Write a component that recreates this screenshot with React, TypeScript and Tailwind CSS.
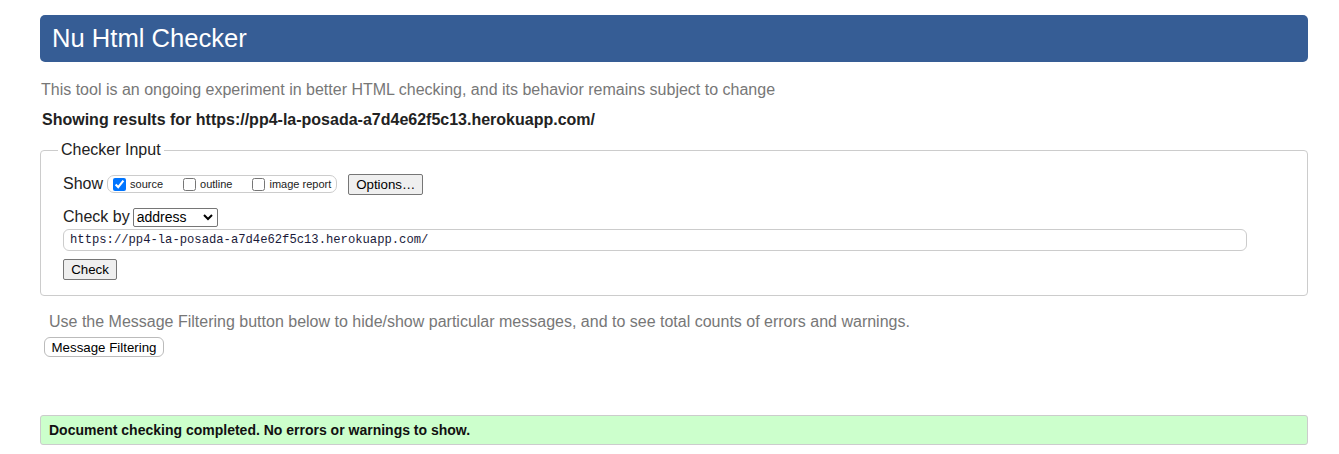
import React from 'react';

const sans = "font-['Liberation_Sans',Arial,sans-serif]";

const Checkbox = ({label, checked}: {label: string; checked?: boolean}) => (
    <label className="flex items-center gap-[4px] text-[11px] text-[#222]">
        <input type="checkbox" defaultChecked={checked} className="m-0 w-[13px] h-[13px] accent-[#0075ff]"/>
        <span>{label}</span>
    </label>
);

const App = () => {
    const url = "https://pp4-la-posada-a7d4e62f5c13.herokuapp.com/";
    return (
        <div className={`${sans} bg-white min-h-[454px] pt-[15px] pl-[40px] pr-[31px]`}>
            <h1 className="bg-[#365d95] text-white text-[25.6px] leading-[47px] h-[47px] rounded-[5px] px-[12px]">
                Nu Html Checker
            </h1>
            <p className="mt-[18px] text-[16px] leading-[20px] text-[#777] pl-[1px]">
                This tool is an ongoing experiment in better HTML checking, and its behavior remains subject to change
            </p>
            <p className="mt-[10px] text-[16px] leading-[20px] font-bold text-[#222] pl-[2px]">
                Showing results for {url}
            </p>
            <fieldset className="mt-[11px] border border-[#ccc] rounded-[4px] pl-[17px] pr-[60px] pb-[15px]">
                <legend className="px-[3px] text-[16px] leading-[18px] text-[#222]">Checker Input</legend>
                <div className="ml-[5px] mt-[14px] flex items-center h-[22px]">
                    <span className="text-[16px] text-[#222] mr-[4px]">Show</span>
                    <div className="flex items-center h-[18px] border border-[#ccc] rounded-[7px] pl-[5px] pr-[5px]">
                        <Checkbox label="source" checked/>
                        <div className="w-[20px]"/>
                        <Checkbox label="outline"/>
                        <div className="w-[20px]"/>
                        <Checkbox label="image report"/>
                    </div>
                    <button className="ml-[11px] h-[21px] w-[75px] text-[13.3px] text-black bg-[#efefef] border border-[#767676] rounded-[2px]">
                        Options…
                    </button>
                </div>
                <div className="ml-[5px] mt-[12px] flex items-center h-[20px]">
                    <span className="text-[16px] text-[#222] mr-[3px]">Check by</span>
                    <div className="relative w-[85px] h-[19px] border border-[#767676] rounded-[2px] bg-white flex items-center pl-[3px] text-[14px] text-black">
                        address
                        <svg className="absolute right-[4px] top-[5px]" width="10" height="7" viewBox="0 0 10 7">
                            <path d="M1 1 L5 5 L9 1" fill="none" stroke="#000" strokeWidth="2"/>
                        </svg>
                    </div>
                </div>
                <div className="ml-[5px] mt-[2px] h-[22px] border border-[#ccc] rounded-[6px] flex items-center pl-[6px] font-['Liberation_Mono',monospace] text-[12.2px] text-[#1a1a3a]">
                    {url}
                </div>
                <button className="ml-[5px] mt-[8px] h-[21px] w-[54px] text-[13.3px] text-black bg-[#efefef] border border-[#767676] rounded-[2px] block">
                    Check
                </button>
            </fieldset>
            <p className="mt-[16px] ml-[9px] text-[16px] leading-[20px] text-[#777]">
                Use the Message Filtering button below to hide/show particular messages, and to see total counts of errors and warnings.
            </p>
            <button className="mt-[5px] ml-[4px] h-[20px] w-[120px] text-[13.3px] text-black bg-white border border-[#bbb] rounded-[6px] block">
                Message Filtering
            </button>
            <div className="mt-[58px] h-[30px] bg-[#ccffcc] border border-[#ccc] rounded-[3px] flex items-center pl-[8px] text-[14px] font-bold text-[#111]">
                Document checking completed. No errors or warnings to show.
            </div>
        </div>
    );
};

export default App;
